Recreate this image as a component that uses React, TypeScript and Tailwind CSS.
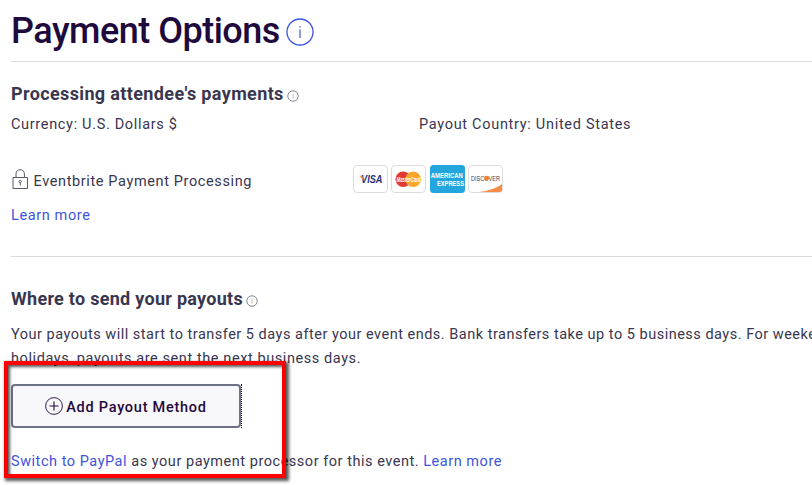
import type { ReactNode } from "react";

function InfoIcon({ className }: { className: string }) {
    return (
        <svg viewBox="0 0 28 28" fill="none" stroke="currentColor" className={className}>
            <circle cx="14" cy="14" r="13" strokeWidth="1.3" />
            <path d="M14 11.5V20" strokeWidth="1.2" />
            <path d="M14 8V9.6" strokeWidth="1.2" />
        </svg>
    );
}

function SmallInfoIcon() {
    return (
        <svg viewBox="0 0 12 12" fill="none" stroke="#7b7a88" className="mt-[3px] ml-[3px] size-3 shrink-0">
            <circle cx="6" cy="6" r="5.2" strokeWidth="0.9" />
            <path d="M6 3.5V8.5" stroke="#c9b9b5" strokeWidth="0.9" />
        </svg>
    );
}

function LockIcon() {
    return (
        <svg viewBox="0 0 18 20" fill="none" stroke="#5b5a6c" className="mr-[4.5px] h-5 w-[18px] shrink-0">
            <path d="M2 8.5H16.5V19.5H2Z" />
            <path d="M5 8.5V5C5 2.3 6.7 0.7 9.2 0.7S13.4 2.3 13.4 5V8.5" />
            <circle cx="9.2" cy="12.6" r="1.2" />
            <path d="M9.2 14V16.3" />
        </svg>
    );
}

function Card({ children }: { children: ReactNode }) {
    return (
        <svg viewBox="0 0 35 28" className="h-7 w-[35px] shrink-0 overflow-visible font-['Liberation_Sans',sans-serif] tracking-normal">
            {children}
        </svg>
    );
}

function CardOutline() {
    return <rect x="0.5" y="0.5" width="34" height="27" rx="3.5" fill="#fff" stroke="#dcdce0" />;
}

function PaymentCards() {
    return (
        <div className="flex gap-[3.3px]">
            <Card>
                <CardOutline />
                <text x="8" y="18.3" fontSize="11" fontWeight="700" fontStyle="italic" fill="#26337a" textLength="21.5" lengthAdjust="spacingAndGlyphs">
                    VISA
                </text>
                <path d="M6 10.7H9L10.2 15Z" fill="#eba43a" />
            </Card>
            <Card>
                <CardOutline />
                <circle cx="12.2" cy="14.3" r="7.8" fill="#e23b35" />
                <circle cx="22.2" cy="14.3" r="7.8" fill="#f9a72b" />
                <text x="5.5" y="16.6" fontSize="6.4" fontWeight="700" fontStyle="italic" fill="#fff" textLength="24" lengthAdjust="spacingAndGlyphs">
                    MasterCard
                </text>
            </Card>
            <Card>
                <rect x="0" y="0" width="35" height="28" rx="3.5" fill="#23a5dd" />
                <g fontWeight="700" fontSize="7" fill="#fff">
                    <text x="0.8" y="13.3" textLength="32" lengthAdjust="spacingAndGlyphs">
                        AMERICAN
                    </text>
                    <text x="7" y="20.8" textLength="27" lengthAdjust="spacingAndGlyphs">
                        EXPRESS
                    </text>
                </g>
            </Card>
            <Card>
                <CardOutline />
                <path d="M11 27C20 26 29 23 34 19V24.5C34 26 33 27 31.5 27Z" fill="#f68b45" />
                <text x="3" y="15.5" fontSize="6.4" fontWeight="400" fill="#44444c" textLength="29" lengthAdjust="spacingAndGlyphs">
                    DISCOVER
                </text>
                <circle cx="18.6" cy="13.2" r="2.4" fill="#f58233" />
            </Card>
        </div>
    );
}

export default function App() {
    return (
        <div className="relative h-[485px] w-[812px] overflow-hidden bg-white pl-[11px] font-['Roboto','Liberation_Sans',sans-serif] text-[14.5px] leading-6 tracking-[0.62px] text-[#39364f]">
            {/* Page title */}
            <header className="flex h-[62px] items-center border-b border-[#dbdae3]">
                <h1 className="text-[36px] leading-none font-medium tracking-[-0.5px] whitespace-nowrap text-[#1e0a3c]">Payment Options</h1>
                <InfoIcon className="mt-[2px] ml-[6px] size-7 text-[#3d54e8]" />
            </header>

            {/* Processing */}
            <section className="h-[195px] border-b border-[#dbdae3] pt-5">
                <div className="flex h-6 items-center">
                    <h2 className="text-[18px] font-bold tracking-[0.37px] whitespace-nowrap">Processing attendee's payments</h2>
                    <SmallInfoIcon />
                </div>
                <div className="mt-[7px] flex">
                    <p className="w-[408px] tracking-[0.67px]">Currency: U.S. Dollars $</p>
                    <p className="tracking-[0.7px]">Payout Country: United States</p>
                </div>
                <div className="mt-[26px] flex h-[32px] items-center">
                    <div className="flex w-[342px] items-center">
                        <LockIcon />
                        <span className="mt-[5px]">Eventbrite Payment Processing</span>
                    </div>
                    <PaymentCards />
                </div>
                <a href="#" className="mt-[9px] block text-[#3d54dc]">Learn more</a>
            </section>

            {/* Payouts */}
            <section className="pt-[30px]">
                <div className="flex h-6 items-center">
                    <h2 className="text-[18px] font-bold tracking-[0.28px] whitespace-nowrap">Where to send your payouts</h2>
                    <SmallInfoIcon />
                </div>
                <p className="mt-[12px] tracking-[0.5px] whitespace-nowrap">
                    Your payouts will start to transfer 5 days after your event ends. Bank transfers take up to 5 business days. For weekends and
                    <br />
                    <span className="tracking-[0.58px]">holidays, payouts are sent the next business days.</span>
                </p>
                <div className="mt-[13px] w-[231px] border-r border-dotted border-black">
                    <button className="flex h-11 w-[230px] items-center justify-center rounded-[4px] border-2 border-[#6f7287] bg-[#f8f7fa] font-medium tracking-[0.74px] text-[#1e0a3c]">
                        <svg viewBox="0 0 18 18" fill="none" stroke="currentColor" className="mr-[3px] size-[18px]">
                            <circle cx="9" cy="9" r="8.4" strokeWidth="0.9" />
                            <path d="M9 4.5V13.5M4.5 9H13.5" strokeWidth="1.1" />
                        </svg>
                        <span className="mt-[3px]">Add Payout Method</span>
                    </button>
                </div>
                <p className="mt-[22px] tracking-[0.53px] whitespace-nowrap">
                    <a href="#" className="text-[#3d54dc]">Switch to PayPal</a> as your payment processor for this event.{" "}
                    <a href="#" className="text-[#3d54dc]">Learn more</a>
                </p>
            </section>

            {/* Highlight drawn over the page */}
            <div className="absolute top-[361px] left-[4px] h-[117px] w-[282px] border-4 border-[#fe0000] shadow-[2px_2px_3px_1px_rgba(0,0,0,0.65),inset_2px_2px_3px_rgba(0,0,0,0.65)]" />
        </div>
    );
}
